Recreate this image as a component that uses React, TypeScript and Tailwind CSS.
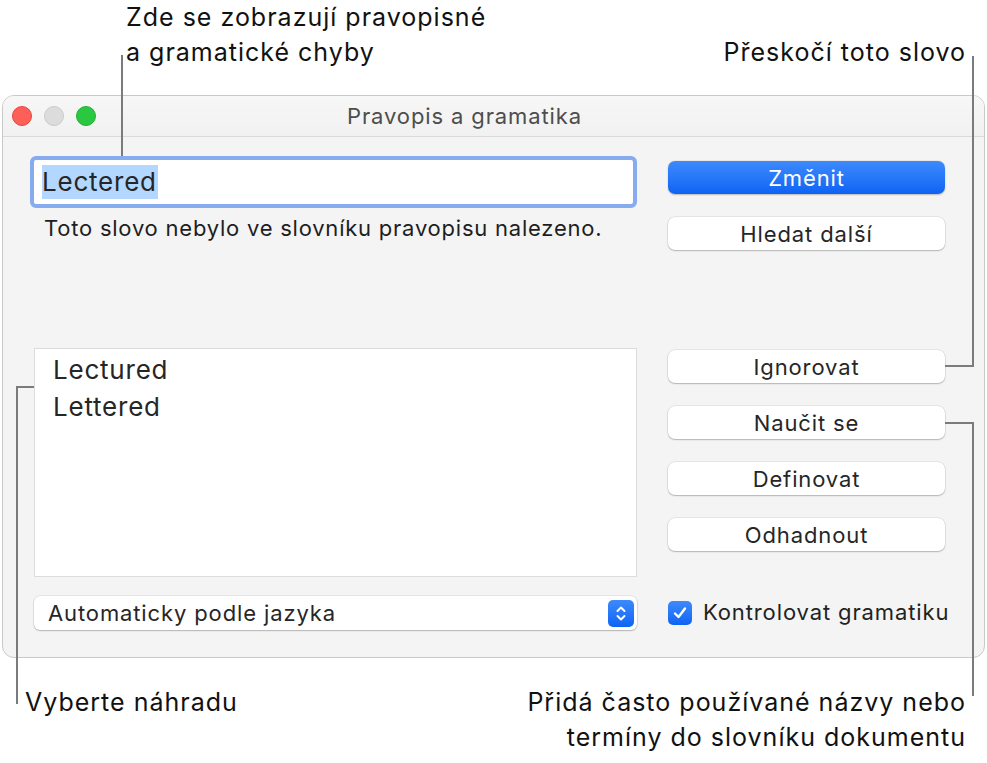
import React from "react";

function Btn({ label, primary = false, mt }: { label: string; primary?: boolean; mt: string }) {
  return (
    <div
      className={
        (primary
          ? "bg-gradient-to-b from-[#3d8afc] to-[#0d63f4] text-white shadow-[0_0.5px_1.5px_rgba(0,0,0,0.25)]"
          : "bg-white text-[#262626] shadow-[0_0_0_0.5px_rgba(0,0,0,0.12),0_1px_1.5px_rgba(0,0,0,0.22)]") +
        " h-[33px] w-[277px] rounded-[7px] flex items-center justify-center text-[22px] tracking-[0.04em] leading-none " +
        mt
      }
    >
      {label}
    </div>
  );
}

export default function App() {
  const line = "absolute bg-[#7b7b7b] z-10";
  return (
    <div
      className="relative w-[987px] h-[763px] bg-white overflow-hidden text-[#111]"
      style={{ fontFamily: "Inter, 'Noto Sans', sans-serif" }}
    >
      {/* top callout labels */}
      <div className="h-[95px] flex justify-between text-[25px] tracking-[0.04em] leading-[35px]">
        <div className="pl-[126px]">
          <div>Zde se zobrazují pravopisné</div>
          <div>a gramatické chyby</div>
        </div>
        <div className="pr-[21px] text-right">
          <div>&nbsp;</div>
          <div>Přeskočí toto slovo</div>
        </div>
      </div>

      {/* window */}
      <div className="mx-[2px] h-[563px] rounded-[12px] border border-[#c9c9c9] bg-[#f4f4f4] overflow-hidden flex flex-col">
        <div className="h-[41px] shrink-0 border-b border-[#dadada] bg-gradient-to-b from-[#f7f7f7] to-[#f1f1f1] flex items-center">
          <div className="flex items-center gap-[12px] pl-[9px]">
            <div className="w-[20px] h-[20px] rounded-full bg-[#fe5f57] border border-[#e5443d]" />
            <div className="w-[20px] h-[20px] rounded-full bg-[#dcdcdc] border border-[#cacaca]" />
            <div className="w-[20px] h-[20px] rounded-full bg-[#2ac840] border border-[#1fae33]" />
          </div>
          <div className="ml-[251px] text-[22px] tracking-[0.04em] text-[#4d4d4d]">Pravopis a gramatika</div>
        </div>

        <div className="flex pl-[27px]">
          {/* left column */}
          <div className="w-[607px] flex flex-col pt-[19px]">
            <div className="h-[52px] rounded-[6px] border-[4px] border-[#86abef] bg-white flex items-center pl-[8px]">
              <span className="bg-[#b3d7ff] text-[26px] tracking-[0.03em] leading-[34px] text-[#262626] pr-[1px]">Lectered</span>
            </div>
            <div className="mt-[8px] pl-[14px] text-[22px] tracking-[0.035em] leading-[24px] text-[#1e1e1e]">
              Toto slovo nebylo ve slovníku pravopisu nalezeno.
            </div>
            <div className="mt-[108px] ml-[4px] w-[603px] h-[229px] bg-white border border-[#dcdcdc] pt-[2px] px-[18px] text-[26px] tracking-[0.03em] leading-[37px] text-[#262626]">
              <div>Lectured</div>
              <div>Lettered</div>
            </div>
            <div className="mt-[19px] ml-[4px] w-[603px] h-[34px] bg-white rounded-[6px] shadow-[0_0_0_0.5px_rgba(0,0,0,0.12),0_1px_1.5px_rgba(0,0,0,0.22)] flex items-center pl-[14px] pr-[3px]">
              <span className="flex-1 text-[22px] tracking-[0.04em] text-[#262626]">Automaticky podle jazyka</span>
              <div className="w-[26px] h-[27px] rounded-[5px] bg-gradient-to-b from-[#3d8afc] to-[#0d63f4] flex items-center justify-center">
                <svg width="12" height="19" viewBox="0 0 12 19" fill="none" stroke="white" strokeWidth="2" strokeLinecap="round" strokeLinejoin="round">
                  <path d="M2.5 7 L6 3.5 L9.5 7" />
                  <path d="M2.5 12 L6 15.5 L9.5 12" />
                </svg>
              </div>
            </div>
          </div>

          {/* right column */}
          <div className="ml-[31px] flex flex-col pt-[24px]">
            <Btn label="Změnit" primary mt="" />
            <Btn label="Hledat další" mt="mt-[23px]" />
            <Btn label="Ignorovat" mt="mt-[100px]" />
            <Btn label="Naučit se" mt="mt-[23px]" />
            <Btn label="Definovat" mt="mt-[23px]" />
            <Btn label="Odhadnout" mt="mt-[23px]" />
            <div className="mt-[45px] flex items-center">
              <div className="w-[24px] h-[24px] rounded-[5px] bg-gradient-to-b from-[#3d8afc] to-[#0d63f4] flex items-center justify-center">
                <svg width="16" height="16" viewBox="0 0 16 16" fill="none" stroke="white" strokeWidth="2.4" strokeLinecap="round" strokeLinejoin="round">
                  <path d="M3 8.5 L6.5 12 L13 3.5" />
                </svg>
              </div>
              <span className="ml-[11px] text-[22px] tracking-[0.04em] text-[#222]">Kontrolovat gramatiku</span>
            </div>
          </div>
        </div>
      </div>

      {/* bottom callout labels */}
      <div className="mt-[27px] flex justify-between text-[25px] tracking-[0.04em] leading-[35px]">
        <div className="pl-[25px]">Vyberte náhradu</div>
        <div className="pr-[21px] text-right">
          <div>Přidá často používané názvy nebo</div>
          <div>termíny do slovníku dokumentu</div>
        </div>
      </div>

      {/* callout lines */}
      <div className={line + " left-[121px] top-[55px] w-[2px] h-[101px]"} />
      <div className={line + " left-[972px] top-[56px] w-[2px] h-[311px]"} />
      <div className={line + " left-[945px] top-[365px] w-[29px] h-[2px]"} />
      <div className={line + " left-[945px] top-[422px] w-[29px] h-[2px]"} />
      <div className={line + " left-[972px] top-[422px] w-[2px] h-[274px]"} />
      <div className={line + " left-[16px] top-[386px] w-[18px] h-[2px]"} />
      <div className={line + " left-[16px] top-[386px] w-[2px] h-[318px]"} />
    </div>
  );
}
